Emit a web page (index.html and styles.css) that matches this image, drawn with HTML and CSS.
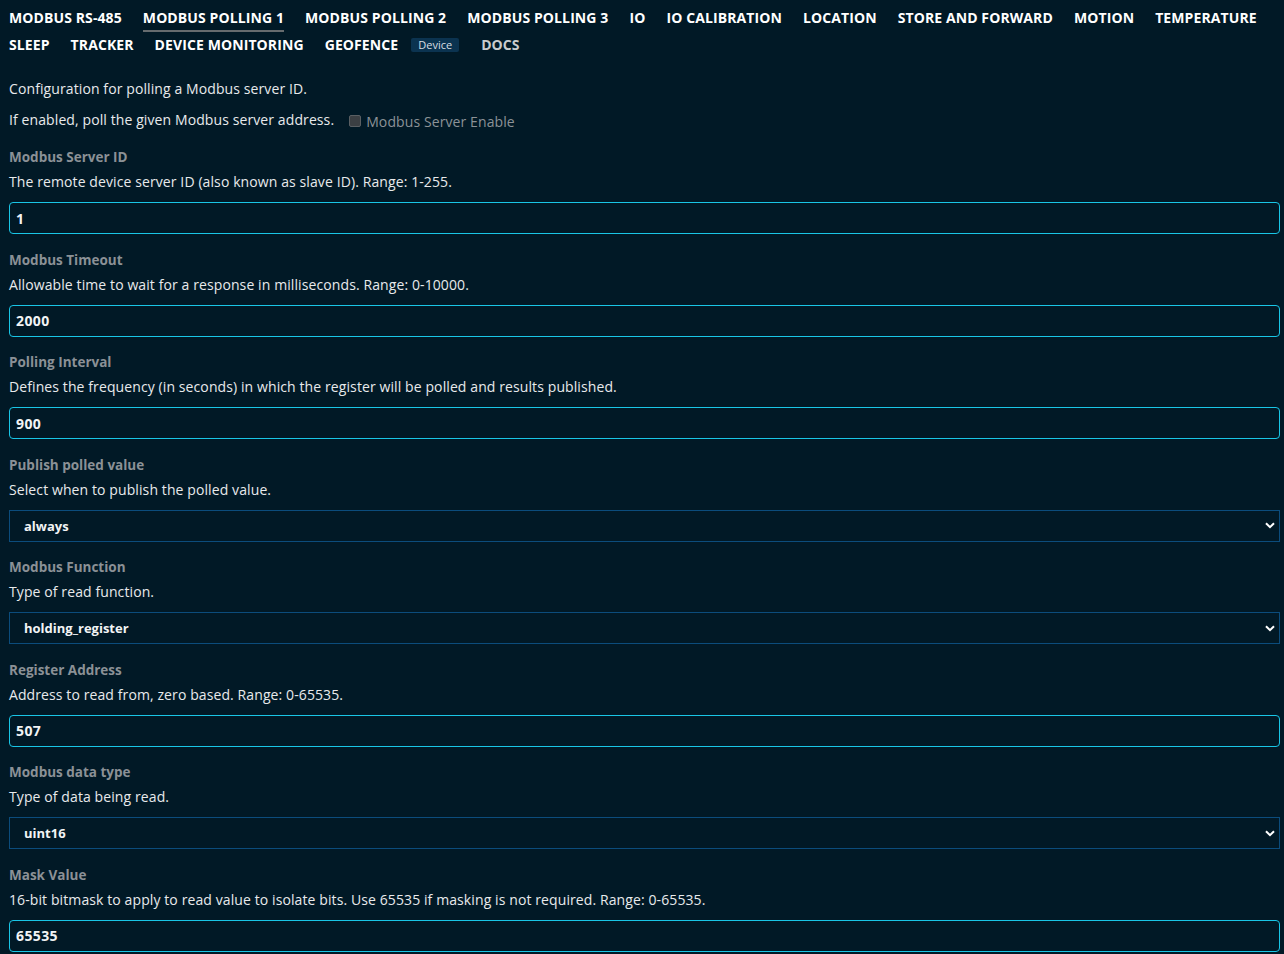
FILE: index.html
```html
<!DOCTYPE html>
<html>
<head>
<meta charset="utf-8">
<link rel="stylesheet" href="styles.css">
</head>
<body>
<nav class="tabs">
  <a class="tab">Modbus RS-485</a>
  <a class="tab active">Modbus Polling 1</a>
  <a class="tab">Modbus Polling 2</a>
  <a class="tab">Modbus Polling 3</a>
  <a class="tab">IO</a>
  <a class="tab">IO Calibration</a>
  <a class="tab">Location</a>
  <a class="tab">Store and Forward</a>
  <a class="tab">Motion</a>
  <a class="tab">Temperature</a>
  <a class="tab">Sleep</a>
  <a class="tab">Tracker</a>
  <a class="tab">Device Monitoring</a>
  <a class="tab">Geofence <span class="badge">Device</span></a>
  <a class="tab dim">Docs</a>
</nav>
<main class="content">
  <p class="intro">Configuration for polling a Modbus server ID.</p>
  <div class="enable-row">
    <span>If enabled, poll the given Modbus server address.</span>
    <label class="check"><span class="box"></span>Modbus Server Enable</label>
  </div>

  <div class="field">
    <div class="label">Modbus Server ID</div>
    <div class="desc">The remote device server ID (also known as slave ID). Range: 1-255.</div>
    <div class="input">1</div>
  </div>
  <div class="field">
    <div class="label">Modbus Timeout</div>
    <div class="desc">Allowable time to wait for a response in milliseconds. Range: 0-10000.</div>
    <div class="input">2000</div>
  </div>
  <div class="field">
    <div class="label">Polling Interval</div>
    <div class="desc">Defines the frequency (in seconds) in which the register will be polled and results published.</div>
    <div class="input">900</div>
  </div>
  <div class="field">
    <div class="label">Publish polled value</div>
    <div class="desc">Select when to publish the polled value.</div>
    <div class="select"><span>always</span><svg class="chev" width="10" height="7" viewBox="0 0 10 7"><path d="M1 1.2 L5 5.2 L9 1.2" fill="none" stroke="#fff" stroke-width="2"/></svg></div>
  </div>
  <div class="field">
    <div class="label">Modbus Function</div>
    <div class="desc">Type of read function.</div>
    <div class="select"><span>holding_register</span><svg class="chev" width="10" height="7" viewBox="0 0 10 7"><path d="M1 1.2 L5 5.2 L9 1.2" fill="none" stroke="#fff" stroke-width="2"/></svg></div>
  </div>
  <div class="field">
    <div class="label">Register Address</div>
    <div class="desc">Address to read from, zero based. Range: 0-65535.</div>
    <div class="input">507</div>
  </div>
  <div class="field">
    <div class="label">Modbus data type</div>
    <div class="desc">Type of data being read.</div>
    <div class="select"><span>uint16</span><svg class="chev" width="10" height="7" viewBox="0 0 10 7"><path d="M1 1.2 L5 5.2 L9 1.2" fill="none" stroke="#fff" stroke-width="2"/></svg></div>
  </div>
  <div class="field">
    <div class="label">Mask Value</div>
    <div class="desc">16-bit bitmask to apply to read value to isolate bits. Use 65535 if masking is not required. Range: 0-65535.</div>
    <div class="input">65535</div>
  </div>
</main>
</body>
</html>
```

FILE: styles.css
```css
html, body {
  margin: 0;
  padding: 0;
  background: #011926;
  height: 100%;
  overflow: hidden;
}
body {
  font-family: "Open Sans", "Noto Sans", sans-serif;
  color: #e8eaec;
  font-size: 14px;
  letter-spacing: 0.1px;
}
.tabs {
  display: flex;
  flex-wrap: wrap;
  column-gap: 21px;
  padding: 5px 9px 0 9px;
}
.tab {
  display: flex;
  align-items: center;
  gap: 10px;
  font-weight: 700;
  text-transform: uppercase;
  font-size: 14px;
  letter-spacing: 0.1px;
  line-height: 17px;
  padding: 4px 0;
  border-bottom: 2px solid transparent;
  color: #ffffff;
}
.tab.active {
  border-bottom-color: #666b6e;
}
.tab.dim {
  color: #c9ccce;
  margin-left: 1px;
}
.badge {
  text-transform: none;
  letter-spacing: 0;
  font-weight: 400;
  font-size: 11px;
  line-height: 14px;
  background: #0b3350;
  color: #d8dde2;
  padding: 0 7px;
  border-radius: 2px;
  margin-left: 3px;
}
.content {
  padding: 20px 4px 0 9px;
}
.intro {
  margin: 0;
  line-height: 20px;
}
.enable-row {
  margin-top: 11px;
  display: flex;
  align-items: center;
  gap: 15px;
  line-height: 20px;
}
.check {
  display: flex;
  align-items: center;
  gap: 5px;
  color: #8c9297;
  position: relative;
  top: 2px;
}
.box {
  width: 10px;
  height: 10px;
  border: 1px solid #5a5f63;
  background: #3b3f43;
  border-radius: 2px;
  position: relative;
  top: -1px;
}
.field {
  margin-top: 17px;
}
.field + .field {
  margin-top: 15.57px;
}
.label {
  color: #8b9196;
  font-weight: 700;
  font-size: 13.5px;
  letter-spacing: 0;
  line-height: 20px;
  margin-bottom: 5px;
}
.desc {
  line-height: 20px;
  margin-bottom: 10px;
}
.input {
  box-sizing: border-box;
  height: 32px;
  border: 1px solid #19c6e6;
  border-radius: 4px;
  padding: 0 6px;
  display: flex;
  align-items: center;
  font-weight: 700;
  letter-spacing: 0.4px;
  color: #f2f4f5;
}
.select {
  box-sizing: border-box;
  height: 32px;
  border: 1px solid #0b4c7c;
  padding: 0 4px 0 14px;
  display: flex;
  align-items: center;
  justify-content: space-between;
  font-weight: 700;
  font-size: 13px;
  letter-spacing: 0;
  color: #f2f4f5;
}
.chev {
  display: block;
}
```
